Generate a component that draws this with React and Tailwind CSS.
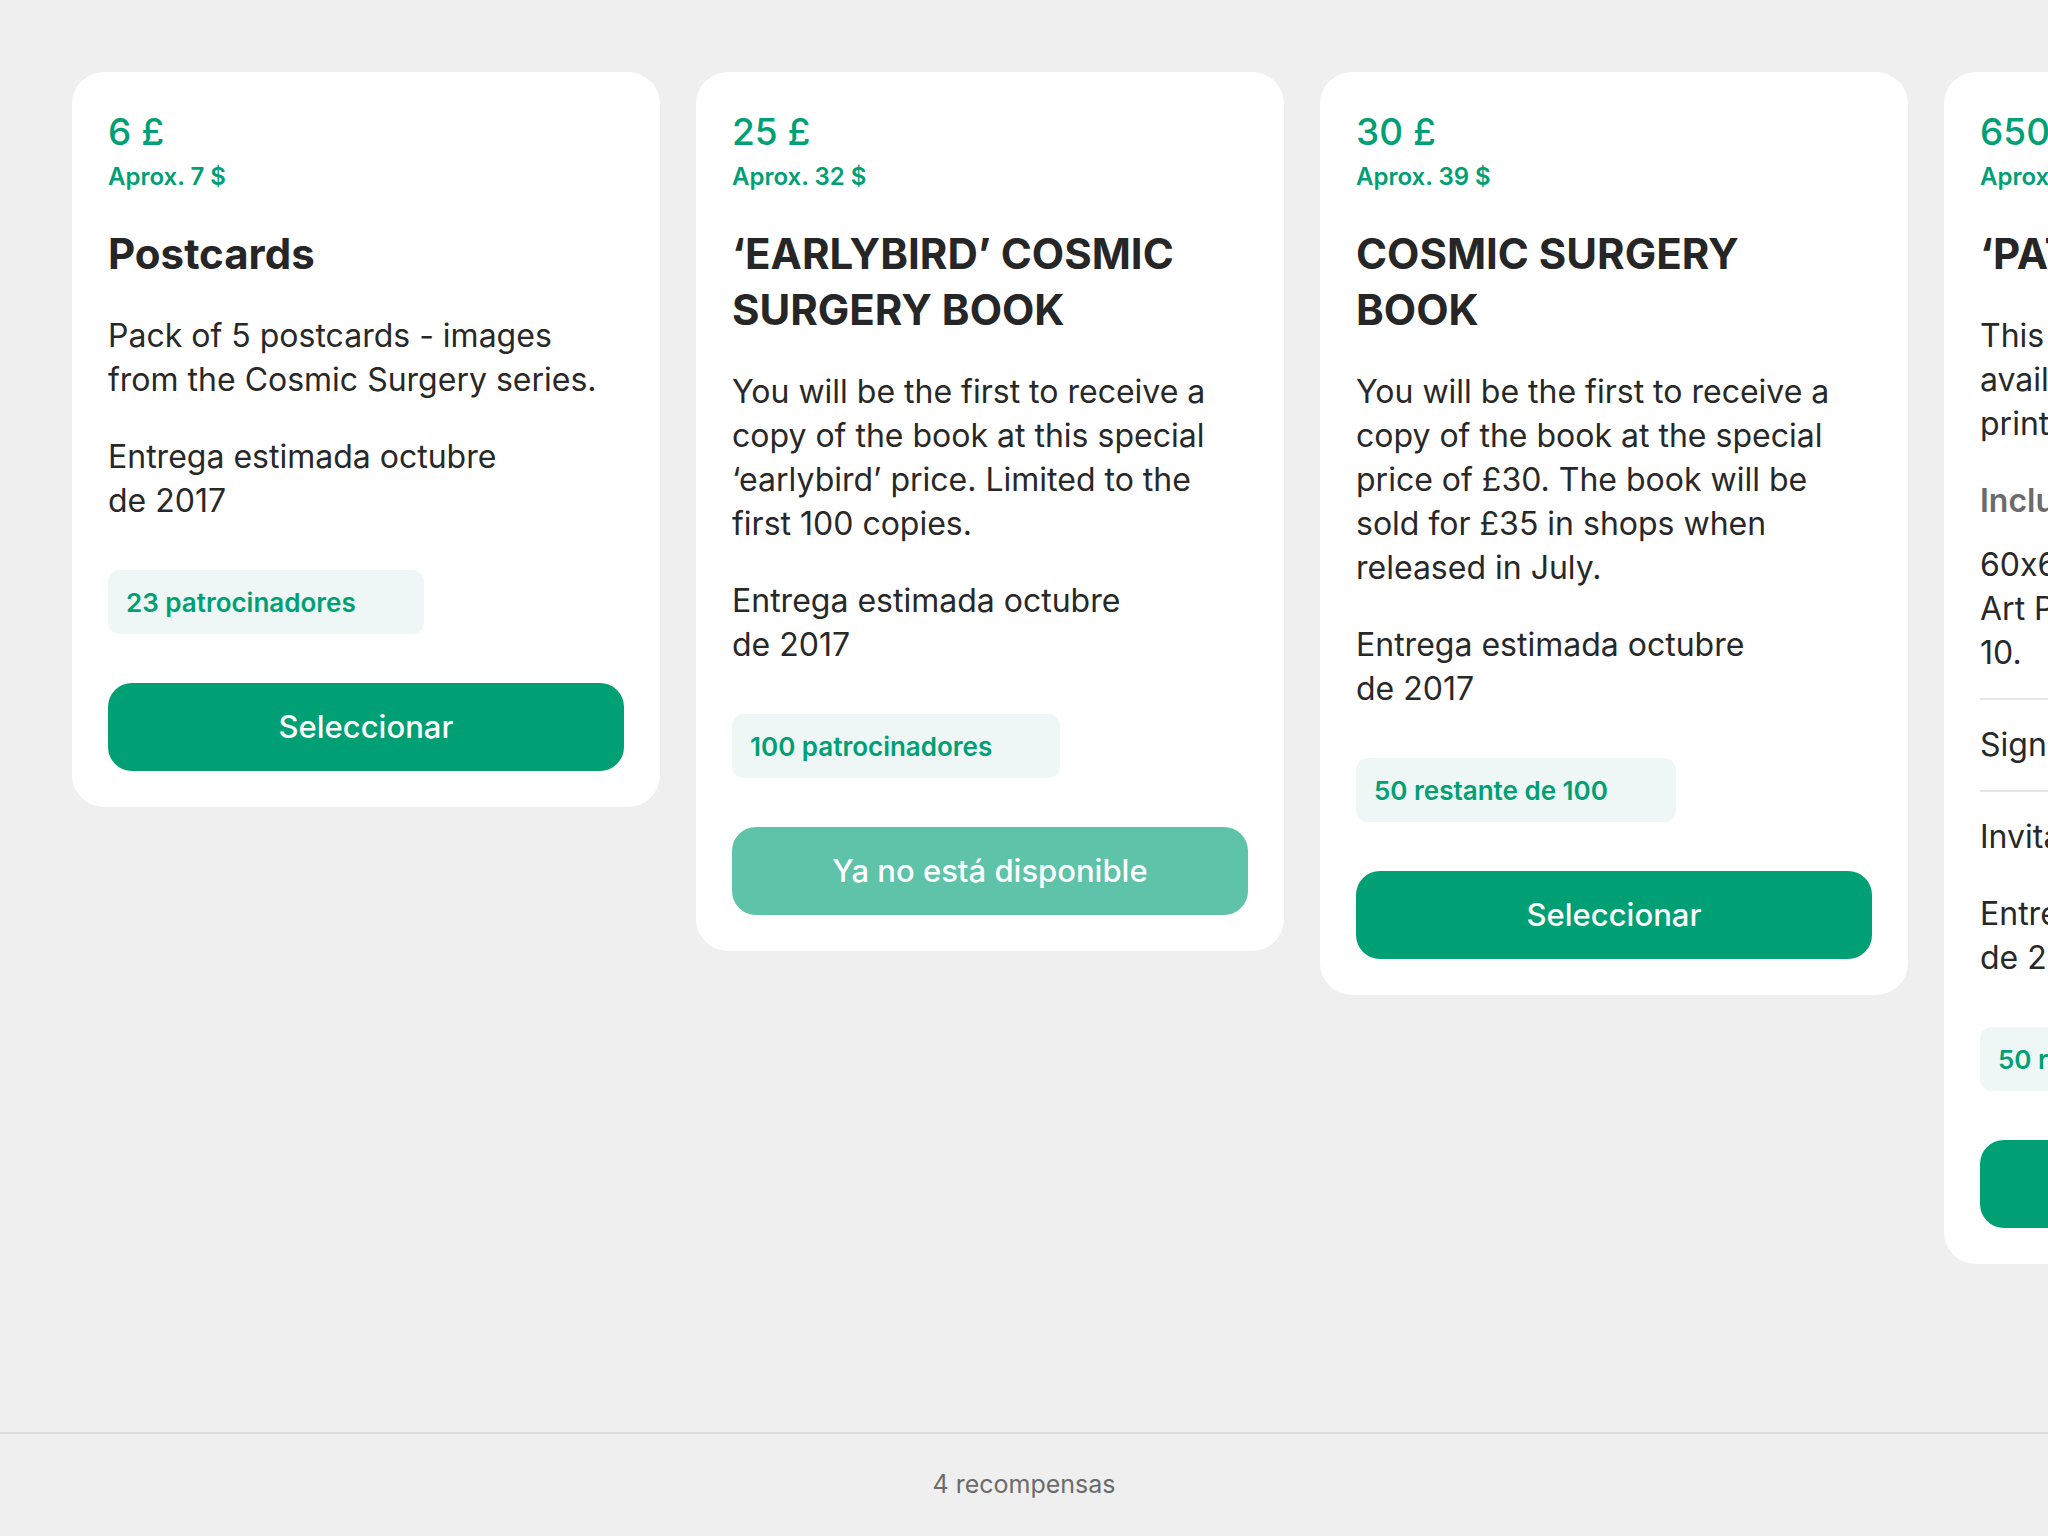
import React from "react";

const rewards = [
  {
    price: "6 £",
    approx: "Aprox. 7 $",
    title: "Postcards",
    body: "Pack of 5 postcards - images\nfrom the Cosmic Surgery series.",
    delivery: "Entrega estimada octubre\nde 2017",
    badge: "23 patrocinadores",
    button: "Seleccionar",
  },
  {
    price: "25 £",
    approx: "Aprox. 32 $",
    title: "‘EARLYBIRD’ COSMIC\nSURGERY BOOK",
    body: "You will be the first to receive a\ncopy of the book at this special\n‘earlybird’ price. Limited to the\nfirst 100 copies.",
    delivery: "Entrega estimada octubre\nde 2017",
    badge: "100 patrocinadores",
    button: "Ya no está disponible",
    disabled: true,
  },
  {
    price: "30 £",
    approx: "Aprox. 39 $",
    title: "COSMIC SURGERY\nBOOK",
    body: "You will be the first to receive a\ncopy of the book at the special\nprice of £30. The book will be\nsold for £35 in shops when\nreleased in July.",
    delivery: "Entrega estimada octubre\nde 2017",
    badge: "50 restante de 100",
    button: "Seleccionar",
  },
  {
    price: "650 £",
    approx: "Aprox. 845 $",
    title: "‘PATIENT’ PRINT",
    body: "This limited edition print is only\navailable through this campaign:\nprinted large on fine art paper.",
    includes: [
      "60x60cm Giclée print on Fine\nArt Paper, signed, edition of\n10.",
      "Signed copy of the book",
      "Invitation to the book launch",
    ],
    delivery: "Entrega estimada octubre\nde 2017",
    badge: "50 restante de 50",
    button: "Seleccionar",
  },
];

function RewardCard({ reward }) {
  return (
    <div className="w-[588px] shrink-0 rounded-[32px] bg-white p-[36px]">
      {/* Price */}
      <div className="text-[37px] leading-[48px] font-medium text-[#00a074]">
        {reward.price}
      </div>
      <div className="mt-[7px] text-[24px] leading-[28px] font-semibold text-[#00a074]">
        {reward.approx}
      </div>

      {/* Title */}
      <h3 className="mt-[35px] whitespace-pre-line text-[42px] leading-[56px] font-bold text-[#262626]">
        {reward.title}
      </h3>

      <p className="mt-[32px] whitespace-pre-line text-[32px] leading-[44px] text-[#282828]">
        {reward.body}
      </p>

      {reward.includes && (
        <div className="mt-[33px]">
          <div className="text-[32px] leading-[44px] font-semibold text-[#6b6b6b]">
            Incluye:
          </div>
          <ul className="divide-y-2 divide-[#e6e6e6]">
            {reward.includes.map((item, i) => (
              <li
                key={i}
                className="whitespace-pre-line py-[23px] first:pt-[20px] last:pb-0 text-[32px] leading-[44px] text-[#282828]"
              >
                {item}
              </li>
            ))}
          </ul>
        </div>
      )}

      <p className="mt-[33px] whitespace-pre-line text-[32px] leading-[44px] text-[#282828]">
        {reward.delivery}
      </p>

      {/* Backers badge */}
      <div className="mt-[47px] flex">
        <div className="flex h-[64px] items-center rounded-[12px] bg-[#eef7f5] pl-[18px] pr-[68px] text-[26px] font-semibold text-[#00a074]">
          {reward.badge}
        </div>
      </div>

      <button
        type="button"
        disabled={reward.disabled}
        className={
          reward.disabled
            ? "mt-[49px] flex h-[88px] w-full items-center justify-center rounded-[24px] bg-[#5ec3a8] text-[31px] font-medium text-white"
            : "mt-[49px] flex h-[88px] w-full items-center justify-center rounded-[24px] bg-[#00a074] text-[31px] font-medium text-white"
        }
      >
        {reward.button}
      </button>
    </div>
  );
}

export default function App() {
  return (
    <div
      className="flex h-screen w-full flex-col overflow-hidden bg-[#efefef] [font-feature-settings:'calt'_0]"
      style={{ fontFamily: "Inter, 'Noto Sans', sans-serif" }}
    >
      <div className="flex flex-1 items-start gap-[36px] overflow-hidden pl-[72px] pt-[72px]">
        {rewards.map((r, i) => (
          <RewardCard key={i} reward={r} />
        ))}
      </div>

      <footer className="flex h-[104px] shrink-0 items-center justify-center border-t-2 border-[#dcdcdc] text-[25px] text-[#6b6b6b]">
        4 recompensas
      </footer>
    </div>
  );
}
